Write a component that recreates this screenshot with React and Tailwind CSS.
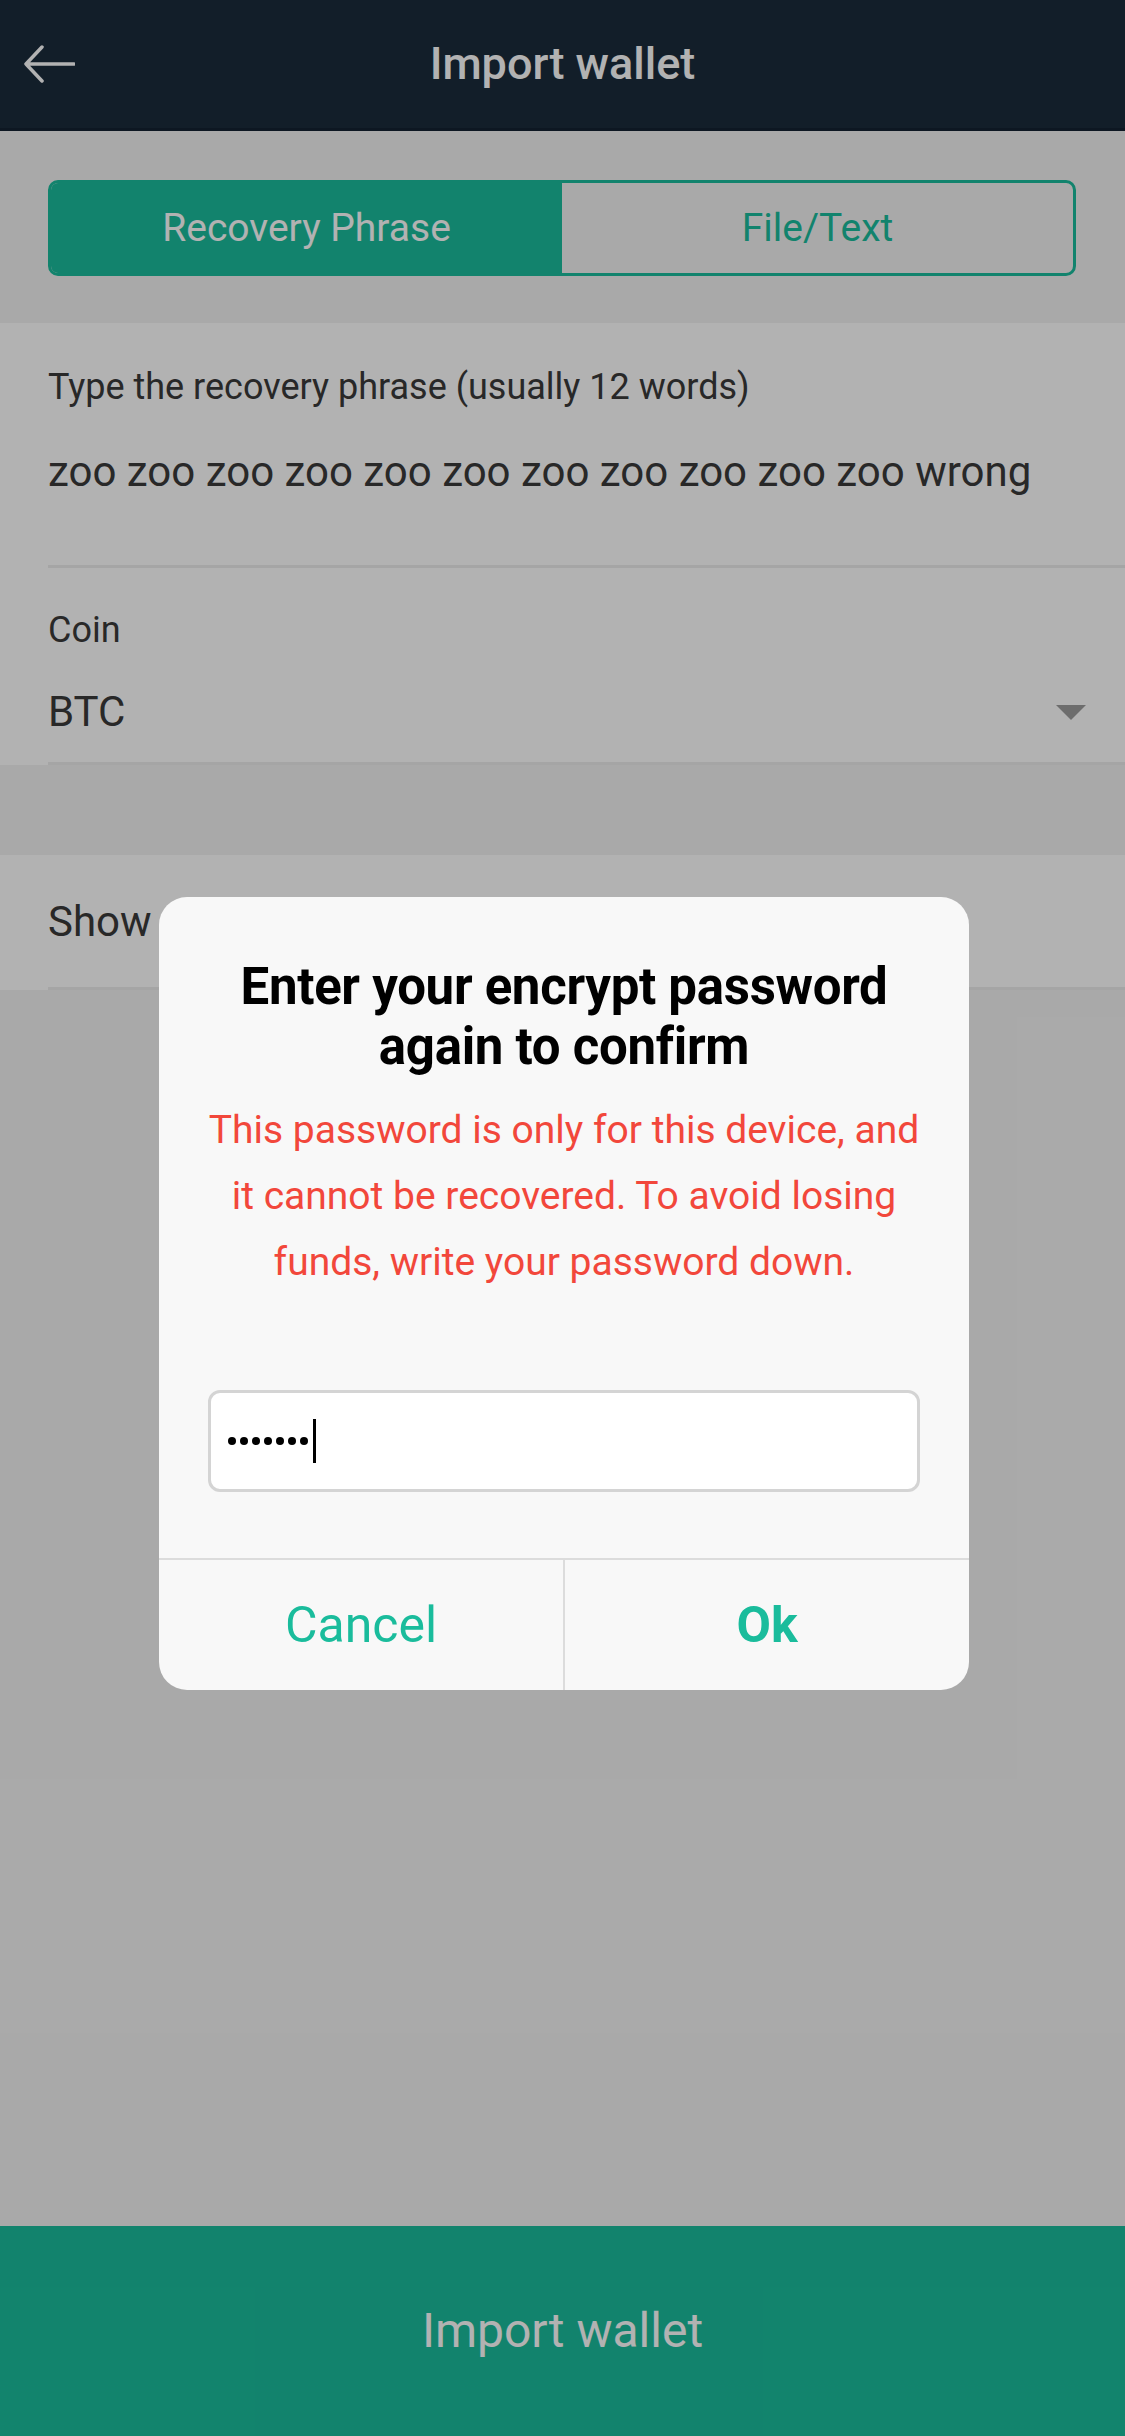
import React from 'react';

const Arrow = () => (
  <svg width="51" height="38" viewBox="0 0 51 38" fill="none">
    <path d="M50 19H2M18 2L2 19l16 17" stroke="#fff" strokeWidth="3.5" strokeLinecap="round" strokeLinejoin="round" />
  </svg>
);

const Caret = () => (
  <svg width="30" height="15" viewBox="0 0 30 15">
    <path d="M0 0h30L15 15z" fill="#9d9d9d" />
  </svg>
);

const PasswordDialog = () => (
  <div className="w-[810px] rounded-[28px] bg-[#f8f8f8] overflow-hidden flex flex-col">
    <div className="pt-[60px] text-center text-[51px] leading-[60px] font-bold text-black tracking-[-0.3px]">
      Enter your encrypt password<br />again to confirm
    </div>
    <div className="mt-[20px] text-center text-[39px] leading-[66px] text-[#f2473b]">
      This password is only for this device, and<br />
      it cannot be recovered. To avoid losing<br />
      funds, write your password down.
    </div>
    <div className="mt-[95px] mx-[49px] h-[102px] border-[3px] border-[#d4d4d4] rounded-[12px] bg-white flex items-center pl-[17px]">
      <div className="flex items-center gap-[4px]">
        {[0, 1, 2, 3, 4, 5, 6].map((i) => (
          <div key={i} className="w-[8px] h-[8px] rounded-full bg-black" />
        ))}
      </div>
      <div className="ml-[5px] w-[3px] h-[44px] bg-black" />
    </div>
    <div className="mt-[66px] border-t-2 border-[#dcdcdc] flex h-[132px]">
      <button className="flex-1 flex items-center justify-center text-[50px] text-[#1abc9c]">Cancel</button>
      <div className="w-[2px] bg-[#dcdcdc]" />
      <button className="flex-1 flex items-center justify-center text-[50px] font-bold text-[#1abc9c]">Ok</button>
    </div>
  </div>
);

export default function App() {
  return (
    <div className="relative w-[1125px] h-[2436px] bg-[#f3f3f3] flex flex-col font-['Roboto',sans-serif]">
      {/* header */}
      <header className="h-[131px] shrink-0 bg-[#1a2b3b] border-b-[3px] border-[#132231] grid grid-cols-[1fr_auto_1fr] items-center">
        <div className="pl-[24px] flex items-center">
          <Arrow />
        </div>
        <h1 className="text-[45px] font-medium text-white">Import wallet</h1>
        <div />
      </header>

      {/* tabs */}
      <div className="pt-[49px] pb-[47px] pl-[48px] pr-[49px]">
        <div className="h-[96px] border-[3px] border-[#1abc9c] rounded-[10px] overflow-hidden flex">
          <div className="flex-1 bg-[#1abc9c] flex items-center justify-center text-[39px] text-white">Recovery Phrase</div>
          <div className="flex-1 flex items-center justify-center text-[39px] text-[#1abc9c]">File/Text</div>
        </div>
      </div>

      {/* phrase + coin */}
      <div className="bg-white pl-[48px]">
        <div className="pt-[40px] text-[36px] leading-[48px] text-[#3a3a3a]">Type the recovery phrase (usually 12 words)</div>
        <div className="mt-[33px] h-[121px] text-[42px] leading-[56px] text-[#3a3a3a]">
          zoo zoo zoo zoo zoo zoo zoo zoo zoo zoo zoo wrong
        </div>
        <div className="border-t-[3px] border-[#ececec]" />
        <div className="pt-[38px] text-[36px] leading-[48px] text-[#3a3a3a]">Coin</div>
        <div className="mt-[30px] pb-[22px] pr-[39px] flex items-center justify-between">
          <span className="text-[42px] leading-[56px] text-[#3a3a3a]">BTC</span>
          <Caret />
        </div>
        <div className="border-t-[3px] border-[#ececec]" />
      </div>

      <div className="h-[90px] shrink-0" />

      {/* show section */}
      <div className="bg-white pl-[48px]">
        <div className="h-[132px] flex items-center text-[42px] text-[#3a3a3a]">Show advanced options</div>
        <div className="border-t-[3px] border-[#ececec]" />
      </div>

      <div className="flex-1" />

      <button className="h-[210px] shrink-0 bg-[#1abc9c] flex items-center justify-center text-[48px] text-white">
        Import wallet
      </button>

      {/* dim overlay + dialog */}
      <div className="absolute inset-0 bg-black/30 flex justify-center pt-[897px] pl-[3px]">
        <div>
          <PasswordDialog />
        </div>
      </div>
    </div>
  );
}
